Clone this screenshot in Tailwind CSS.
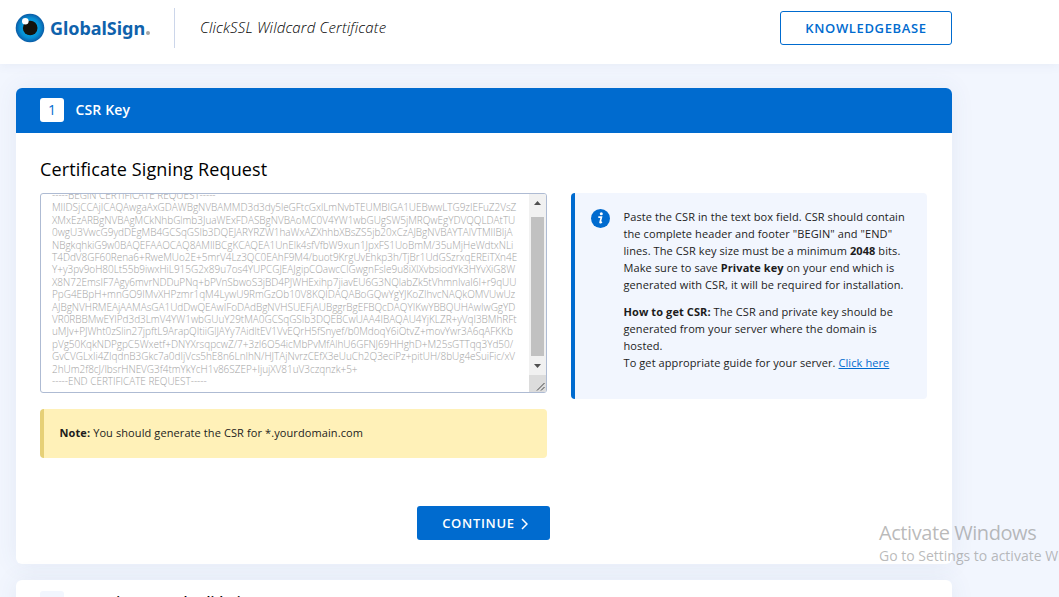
<!DOCTYPE html>
<html lang="en">
<head>
<meta charset="utf-8">
<title>GlobalSign - CSR Key</title>
<script src="https://cdn.jsdelivr.net/npm/@tailwindcss/browser@4"></script>
</head>
<body class="relative h-[597px] overflow-hidden bg-[#f2f6fe] font-['Open_Sans','Noto_Sans',sans-serif] text-black">
<header class="relative flex h-16 items-start bg-white shadow-[0_2px_10px_rgba(60,80,140,0.06)]">
  <a class="mt-[13px] ml-[15px] flex h-[30px] items-center">
    <svg width="30" height="30" viewBox="0 0 30 30">
      <defs><radialGradient id="iris"><stop offset=".45" stop-color="#04a0e0"/><stop offset=".7" stop-color="#078dd2"/><stop offset="1" stop-color="#0b5ba6"/></radialGradient></defs>
      <circle cx="15" cy="15" r="14.3" fill="url(#iris)"/>
      <circle cx="15.2" cy="15" r="7.3" fill="#14130c"/>
      <circle cx="10.3" cy="8.3" r="3.3" fill="#fff"/>
    </svg>
    <span class="ml-[5px] w-[95px] whitespace-nowrap font-['Noto_Sans',sans-serif] text-[18px] leading-[30px] font-bold tracking-[-0.05px] text-[#0f62ac]">GlobalSign</span>
    <span class="mt-[9px] ml-px size-[4px] rounded-full bg-[#a5a5a5]"></span>
  </a>
  <div class="mt-2 ml-[24px] h-10 w-px bg-[#ccd6ea]"></div>
  <div class="mt-[16px] ml-[25px] w-[580px] text-[15px] leading-[22px] font-[350] tracking-[.15px] italic">ClickSSL Wildcard Certificate</div>
  <a class="mt-[11px] flex h-[34px] w-[172px] items-center justify-center rounded-[3px] border border-[#006bcf] pt-px text-[13px] font-semibold tracking-[.65px] text-[#006bcf]">KNOWLEDGEBASE</a>
</header>

<main class="mt-6 ml-4 flex w-[936px] flex-col gap-4">
  <section class="h-[476px] rounded-md bg-white shadow-[0_0_24px_rgba(60,90,140,0.08)]">
    <div class="flex h-[45px] items-start rounded-t-md bg-[#006bcf] px-6 pt-[10px]">
      <span class="flex size-6 items-center justify-center rounded-[3px] bg-white text-sm text-[#006bcf]">1</span>
      <h2 class="ml-[11.5px] text-sm leading-6 font-semibold tracking-[.15px] text-white">CSR Key</h2>
    </div>
    <div class="px-6 pt-[22px]">
      <h3 class="h-[38px] text-lg leading-7 font-medium tracking-[.13px]">Certificate Signing Request</h3>
      <div class="flex gap-6">
        <div class="w-[507px]">
          <div class="flex h-[200px] overflow-hidden rounded-[3px] border border-[#aebbd3] bg-white">
            <pre class="mt-[-5px] w-[489px] pl-[11px] font-['Open_Sans','Noto_Sans',sans-serif] text-[10px] leading-[12.4px] font-light tracking-[-0.03px] text-[#a4a4a4]">-----BEGIN CERTIFICATE REQUEST-----
MIIDSjCCAjICAQAwgaAxGDAWBgNVBAMMD3d3dy5leGFtcGxlLmNvbTEUMBIGA1UEBwwLTG9zIEFuZ2VsZ
XMxEzARBgNVBAgMCkNhbGlmb3JuaWExFDASBgNVBAoMC0V4YW1wbGUgSW5jMRQwEgYDVQQLDAtTU
0wgU3VwcG9ydDEgMB4GCSqGSIb3DQEJARYRZW1haWxAZXhhbXBsZS5jb20xCzAJBgNVBAYTAlVTMIIBIjA
NBgkqhkiG9w0BAQEFAAOCAQ8AMIIBCgKCAQEA1UnElk4sfVfbW9xun1JpxFS1UoBmM/35uMjHeWdtxNLi
T4DdV8GF60Rena6+RweMUo2E+5mrV4Lz3QC0EAhF9M4/buot9KrgUvEhkp3h/TjBr1UdGSzrxqEREiTXn4E
Y+y3pv9oH80Lt55b9iwxHiL915G2x89u7os4YUPCGJEAJgipCOawcClGwgnFsIe9u8iXlXvbsiodYk3HYvXiG8W
X8N72EmsIF7Agy6mvrNDDuPNq+bPVnSbwoS3jBD4PJWHExihp7jiavEU6G3NQlabZk5tVhmnIvaI6I+r9qUU
PpG4EBpH+mnGO9IMvXHPzmr1qM4LywU9RmGzOb10V8KQIDAQABoGQwYgYJKoZIhvcNAQkOMVUwUz
AJBgNVHRMEAjAAMAsGA1UdDwQEAwIFoDAdBgNVHSUEFjAUBggrBgEFBQcDAQYIKwYBBQUHAwIwGgYD
VR0RBBMwEYIPd3d3LmV4YW1wbGUuY29tMA0GCSqGSIb3DQEBCwUAA4IBAQAU4YjKLZR+yVqI3BMhRFt
uMJv+PJWht0zSlin27jpftL9ArapQItiiGlJAYy7AidltEV1VvEQrH5fSnyef/b0MdoqY6iOtvZ+movYwr3A6qAFKKb
pVg50KqkNDPgpC5Wxetf+DNYXrsqpcwZ/7+3zI6O54icMbPvMfAlhU6GFNJ69HHghD+M25sGTTqq3Yd50/
GvCVGLxIi4ZIqdnB3Gkc7a0dIjVcs5hE8n6LnIhN/HJTAjNvrzCEfX3eUuCh2Q3eciPz+pitUH/8bUg4eSuiFic/xV
2hUm2f8cJ/IbsrHNEVG3f4tmYkYcH1v86SZEP+IjujXV81uV3czqnzk+5+
-----END CERTIFICATE REQUEST-----</pre>
            <div class="flex w-[17px] shrink-0 flex-col items-center bg-[#f1f1f1]">
              <svg width="17" height="22" viewBox="0 0 17 22"><path d="M5 11h7L8.500 7z" fill="#505050"/></svg>
              <div class="mt-px h-[139px] w-[13px] bg-[#c1c1c1]"></div>
              <svg width="17" height="19" viewBox="0 0 17 19"><path d="M5 8h7l-3.500 4z" fill="#505050"/></svg>
              <svg class="bg-[#dcdcdc]" width="17" height="17" viewBox="0 0 17 17"><path d="M8 15.500L15.500 8M12 15.500L15.500 12" stroke="#444" fill="none"/></svg>
            </div>
          </div>
          <p class="mt-4 flex h-[49px] items-center rounded-[4px] border-l-4 border-[#e6d077] bg-[#fff1b8] pl-[15.5px] text-[11px] tracking-[.1px] text-[#1c1c1c]"><span><b class="font-bold">Note:</b> You should generate the CSR for *.yourdomain.com</span></p>
        </div>
        <aside class="flex h-[206px] w-[356px] rounded-[4px] border-l-4 border-[#006bcf] bg-[#f2f6fe]">
          <svg class="mt-4 ml-4 shrink-0" width="19" height="19" viewBox="0 0 19 19"><circle cx="9.500" cy="9.500" r="9.500" fill="#006bcf"/><circle cx="10.300" cy="4.800" r="1.500" fill="#fff"/><path d="M7.300 8.200h3.100l-1.300 5.200q-.1.700 1.900-.3" fill="none" stroke="#fff" stroke-width="1.700"/></svg>
          <div class="mt-[15px] ml-[13.500px] text-[11px] leading-[17px] tracking-[.09px] whitespace-nowrap text-[#1c1c1c]">
            <p>Paste the CSR in the text box field. CSR should contain<br>the complete header and footer "BEGIN" and "END"<br>lines. The CSR key size must be a minimum <b>2048</b> bits.<br>Make sure to save <b>Private key</b> on your end which is<br>generated with CSR, it will be required for installation.</p>
            <p class="mt-[10px]"><b>How to get CSR:</b> The CSR and private key should be<br>generated from your server where the domain is<br>hosted.<br>To get appropriate guide for your server. <a class="text-[#006bcf] underline">Click here</a></p>
          </div>
        </aside>
      </div>
      <button class="mt-[48px] ml-[377px] flex h-[34px] w-[133px] items-center justify-center gap-[6px] rounded-[3px] bg-[#006bcf] pt-px pl-[3px] text-[13px] font-semibold tracking-[.7px] text-white">CONTINUE
        <svg width="7" height="12" viewBox="0 0 7 12"><path d="M1 1l5 5-5 5" fill="none" stroke="#fff" stroke-width="1.500"/></svg>
      </button>
    </div>
  </section>
  <section class="h-16 rounded-md bg-white shadow-[0_0_24px_rgba(60,90,140,0.08)]">
    <div class="flex items-start px-6 pt-[11px]">
      <span class="flex size-6 items-center justify-center rounded-[3px] bg-[#f2f6fe] text-sm text-[#006bcf]">2</span>
      <h2 class="ml-[12px] text-sm leading-[22px] font-semibold [word-spacing:-1.3px]">Domain SAN and Validation</h2>
    </div>
  </section>
</main>

<div class="absolute top-[520px] left-[879px] font-['Open_Sans',sans-serif] whitespace-nowrap text-[#8c8c8c]/60">
  <div class="text-xl leading-[26px] tracking-[-0.43px]">Activate Windows</div>
  <div class="text-sm leading-5">Go to Settings to activate Windows.</div>
</div>
</body>
</html>
